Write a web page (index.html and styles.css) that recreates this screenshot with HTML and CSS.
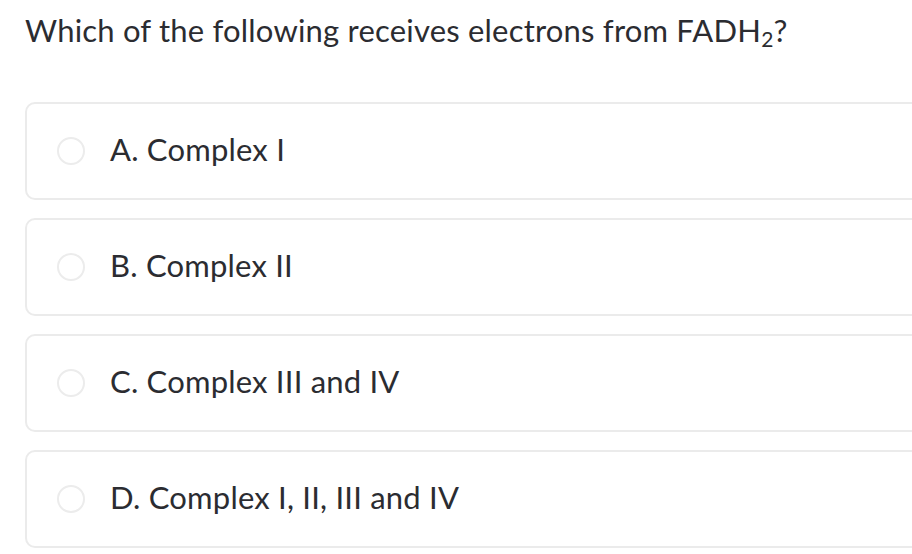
FILE: index.html
```html
<!DOCTYPE html>
<html>
<head>
<meta charset="utf-8">
<link rel="stylesheet" href="styles.css">
</head>
<body>
<div class="page">
  <h1 class="question">Which of the following receives electrons from FADH<sub>2</sub>?</h1>
  <div class="options">
    <label class="option"><span class="radio"></span><span class="label">A. Complex I</span></label>
    <label class="option"><span class="radio"></span><span class="label">B. Complex II</span></label>
    <label class="option"><span class="radio"></span><span class="label">C. Complex III and IV</span></label>
    <label class="option"><span class="radio"></span><span class="label">D. Complex I, II, III and IV</span></label>
  </div>
</div>
</body>
</html>
```
FILE: styles.css
```css
html, body {
  margin: 0;
  padding: 0;
  background: #ffffff;
  overflow: hidden;
}
.page {
  padding: 0 0 0 25px;
  font-family: "Lato", "Liberation Sans", sans-serif;
  color: #2b2c31;
}
.question {
  margin: 0;
  padding-top: 11px;
  font-size: 31px;
  font-weight: 400;
  letter-spacing: 0.2px;
  line-height: 38px;
  height: 91px;
}
.question sub {
  font-size: 21px;
  line-height: 0;
  vertical-align: -5px;
}
.options {
  display: flex;
  flex-direction: column;
  gap: 18px;
  width: 920px;
}
.option {
  display: flex;
  align-items: center;
  height: 94px;
  border: 2px solid #ebebeb;
  border-radius: 10px;
  padding-left: 30px;
}
.radio {
  box-sizing: border-box;
  width: 28px;
  height: 28px;
  border: 2px solid #ececec;
  border-radius: 50%;
  flex: none;
}
.label {
  margin-left: 25px;
  font-size: 31px;
  letter-spacing: 0.2px;
  position: relative;
  top: -2px;
}
```
